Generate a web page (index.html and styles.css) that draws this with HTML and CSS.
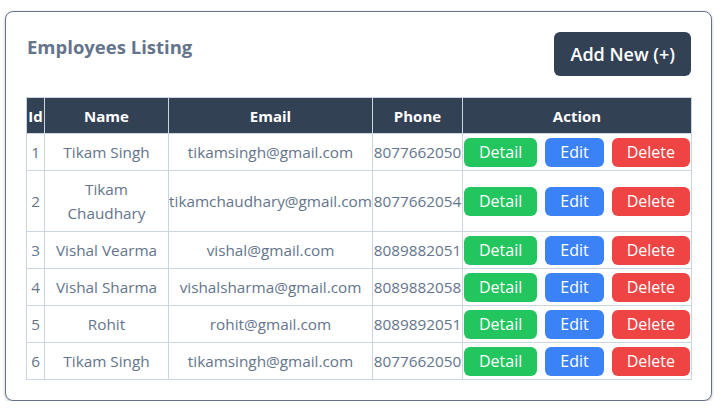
FILE: index.html
```html
<!DOCTYPE html>
<html lang="en">
<head>
<meta charset="utf-8">
<title>Employees Listing</title>
<link rel="stylesheet" href="styles.css">
</head>
<body>
<div class="card">
  <div class="card-head">
    <h2 class="title">Employees Listing</h2>
    <button class="btn-add">Add New (+)</button>
  </div>
  <table class="emp-table">
    <colgroup>
      <col class="c-id"><col class="c-name"><col class="c-email"><col class="c-phone"><col class="c-action">
    </colgroup>
    <thead>
      <tr><th>Id</th><th>Name</th><th>Email</th><th>Phone</th><th>Action</th></tr>
    </thead>
    <tbody>
      <tr><td>1</td><td>Tikam Singh</td><td class="nw">tikamsingh@gmail.com</td><td class="nw">8077662050</td><td class="act"><div class="actions"><button class="btn green">Detail</button><button class="btn blue">Edit</button><button class="btn red">Delete</button></div></td></tr>
      <tr><td>2</td><td>Tikam Chaudhary</td><td class="nw">tikamchaudhary@gmail.com</td><td class="nw">8077662054</td><td class="act"><div class="actions"><button class="btn green">Detail</button><button class="btn blue">Edit</button><button class="btn red">Delete</button></div></td></tr>
      <tr><td>3</td><td>Vishal Vearma</td><td class="nw">vishal@gmail.com</td><td class="nw">8089882051</td><td class="act"><div class="actions"><button class="btn green">Detail</button><button class="btn blue">Edit</button><button class="btn red">Delete</button></div></td></tr>
      <tr><td>4</td><td>Vishal Sharma</td><td class="nw">vishalsharma@gmail.com</td><td class="nw">8089882058</td><td class="act"><div class="actions"><button class="btn green">Detail</button><button class="btn blue">Edit</button><button class="btn red">Delete</button></div></td></tr>
      <tr><td>5</td><td>Rohit</td><td class="nw">rohit@gmail.com</td><td class="nw">8089892051</td><td class="act"><div class="actions"><button class="btn green">Detail</button><button class="btn blue">Edit</button><button class="btn red">Delete</button></div></td></tr>
      <tr><td>6</td><td>Tikam Singh</td><td class="nw">tikamsingh@gmail.com</td><td class="nw">8077662050</td><td class="act"><div class="actions"><button class="btn green">Detail</button><button class="btn blue">Edit</button><button class="btn red">Delete</button></div></td></tr>
    </tbody>
  </table>
</div>
</body>
</html>
```
FILE: styles.css
```css
* { box-sizing: border-box; }
body {
  margin: 0;
  background: #ffffff;
  font-family: "Open Sans", "Noto Sans", sans-serif;
  color: #64748b;
}
.card {
  margin: 11px 9px 0 5px;
  border: 1px solid #64748b;
  border-radius: 8px;
  padding: 20px;
  box-shadow: 0 1px 3px rgba(0,0,0,0.25);
  background: #fff;
}
.card-head {
  display: flex;
  justify-content: space-between;
  align-items: flex-start;
  margin-bottom: 21px;
}
.title {
  margin: 1px 0 0 1px;
  font-size: 18.5px;
  line-height: 28px;
  font-weight: 700;
  color: #64748b;
}
.btn-add {
  height: 44px;
  padding: 0 16px;
  border: none;
  border-radius: 6px;
  background: #334155;
  color: #fff;
  font-family: inherit;
  font-size: 18px;
  font-weight: 600;
}
.emp-table {
  width: 665px;
  table-layout: fixed;
  border-collapse: collapse;
  font-size: 15.3px;
}
.c-id { width: 18px; }
.c-name { width: 124px; }
.c-email { width: 204px; }
.c-phone { width: 90px; }
.c-action { width: 229px; }
.emp-table th {
  background: #334155;
  color: #fff;
  font-weight: 700;
  font-size: 15px;
  border: 1px solid #cbd5e1;
  padding: 6px 0 5px;
  line-height: 24px;
  text-align: center;
}
.emp-table td {
  border: 1px solid #cbd5e1;
  padding: 6px 4px;
  line-height: 24px;
  text-align: center;
  vertical-align: middle;
  color: #64748b;
}
.emp-table td:first-child { padding: 6px 0; }
.emp-table td.nw { white-space: nowrap; padding: 6px 0; }
.emp-table td.act { padding: 0 1px; }
.actions {
  display: flex;
  justify-content: center;
  gap: 8px;
}
.btn {
  height: 29px;
  padding: 0 15px;
  border: none;
  border-radius: 6px;
  color: #fff;
  font-family: inherit;
  font-size: 16px;
  line-height: 29px;
}
.green { background: #22c55e; }
.blue { background: #3b82f6; }
.red { background: #ef4444; }
```
